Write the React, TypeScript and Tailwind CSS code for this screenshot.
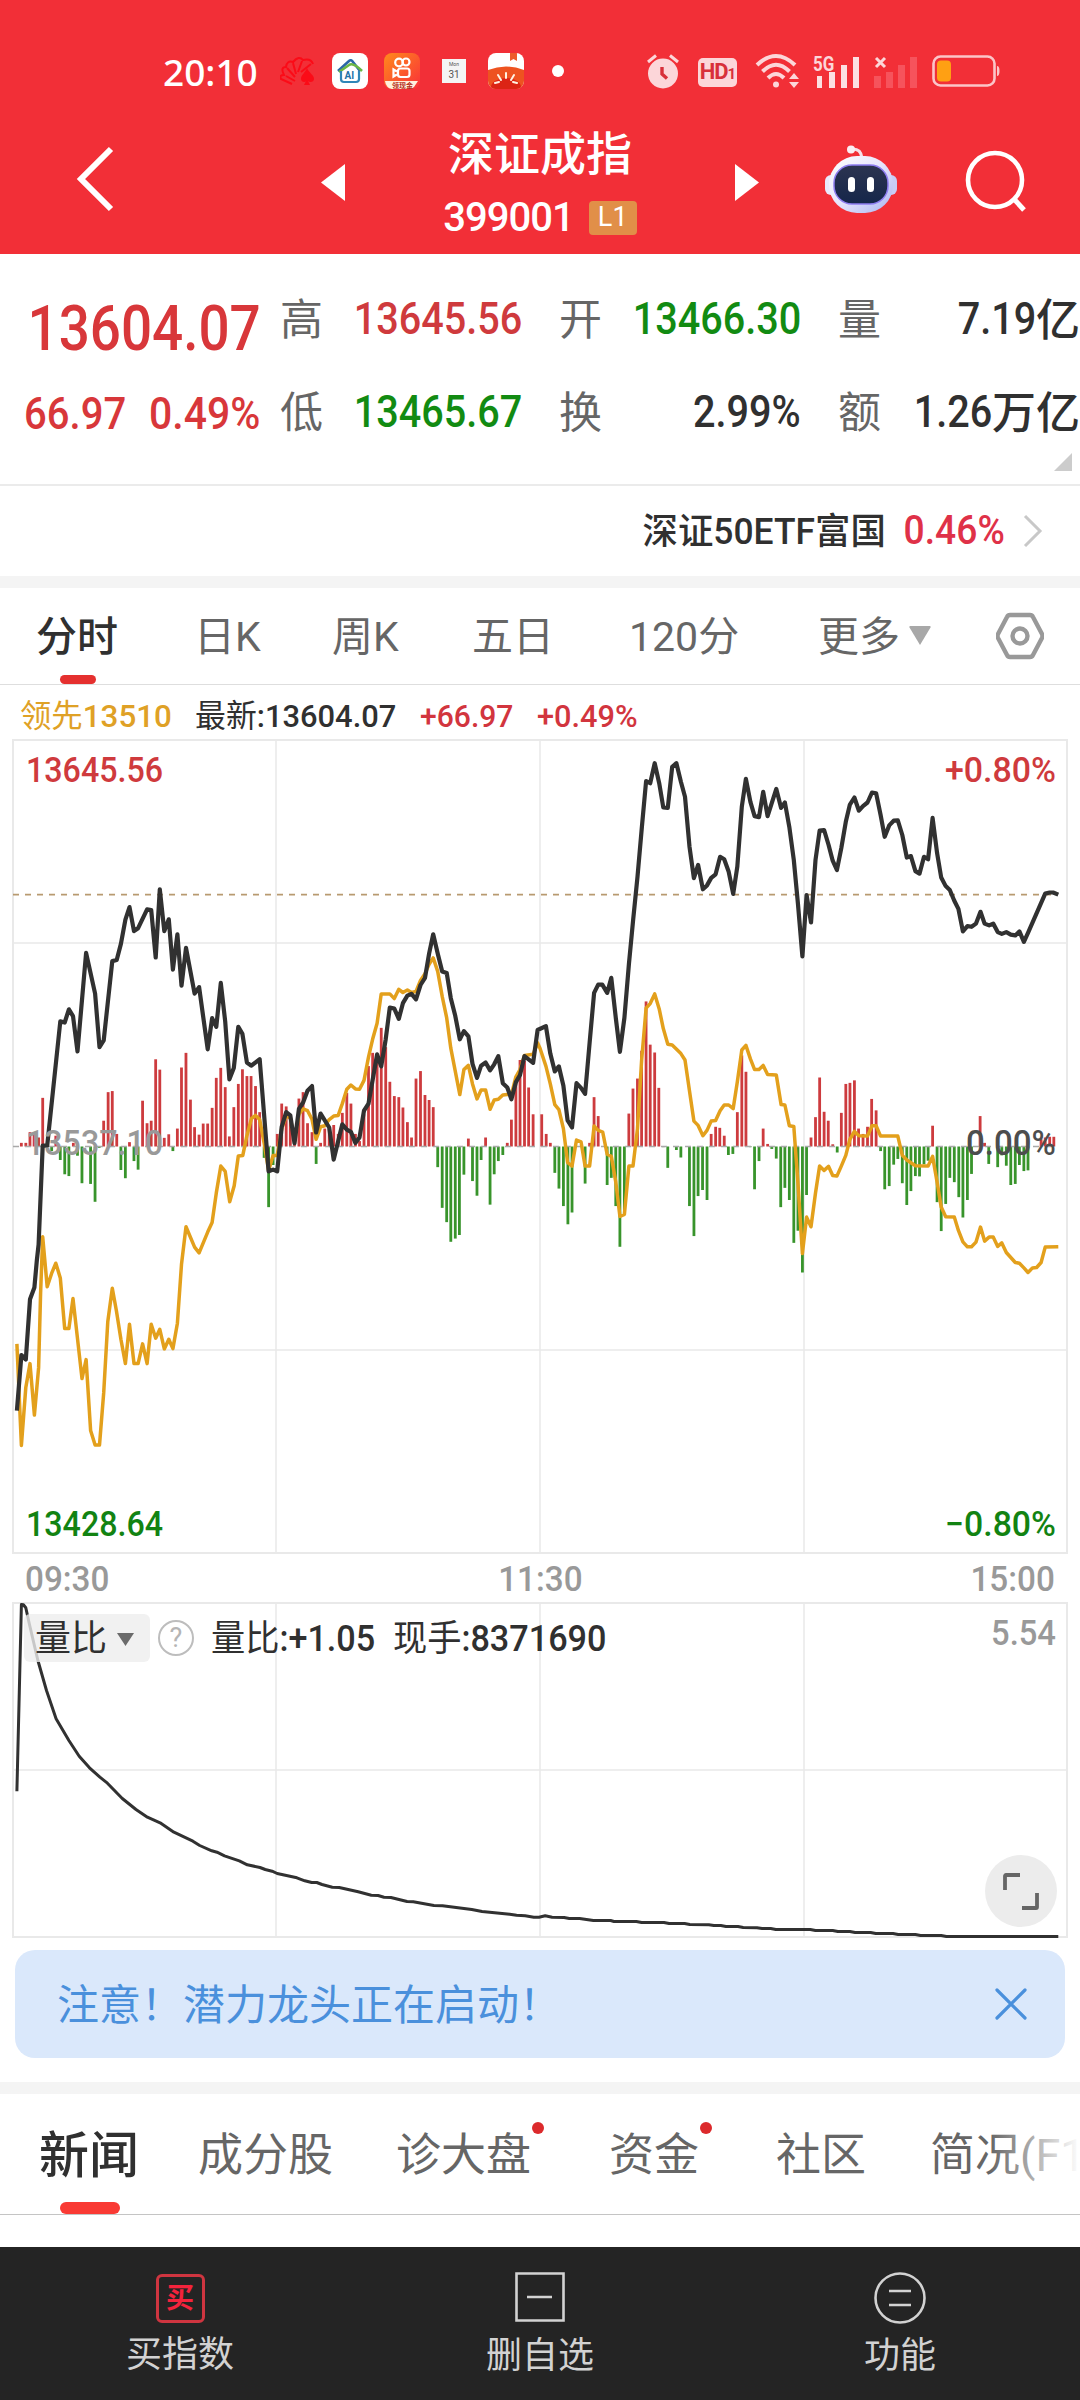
import { ReactNode } from 'react';
import { clsx } from 'clsx';

// Both sessions are stored in plot units: 1/2.9037 px across, 1/2.8 px down.
// The afternoon starts at x = 528 of the plot.
const PRICE_AM =
  '49,1430 62,1274 75,1287 87,1118 100,1085 107,1010 112,965 124,688 137,688 175,340 188,343 200,306 212,325 225,424 250,148 276,262 289,412 301,393 326,171 339,168 351,123 364,55 376,20 389,87 401,79 427,26 439,28 452,161 464,-30 477,87 490,54 502,195 515,96 527,240 540,134 565,262 578,244 603,418 616,331 628,355 641,232 654,340 666,502 679,470 692,355 704,375 717,455 729,464 754,446 780,760 793,755 805,760 818,635 831,594 843,603 855,681 868,585 880,567 893,534 906,521 918,651 931,598 956,637 969,727 994,628 1007,643 1019,649 1032,680 1044,665 1057,590 1070,570 1095,432 1107,466 1120,390 1132,301 1145,304 1158,333 1170,289 1183,268 1195,263 1208,278 1221,238 1234,218 1246,150 1258,96 1271,150 1284,200 1297,204 1309,275 1322,325 1335,390 1347,367 1360,382 1372,459 1385,498 1397,464 1410,455 1423,477 1435,460 1447,437 1460,513 1473,525 1485,558 1498,510 1510,490 1523,437 1535,446 1548,456 1561,364';
const PRICE_PM =
  '17,353 30,430 43,480 55,466 68,520 80,617 93,637 106,513 119,526 131,543 144,400 157,260 169,237 181,237 195,260 207,218 220,330 232,425 245,330 258,180 270,60 283,-65 296,-205 308,-333 320,-327 333,-383 346,-327 358,-259 371,-258 384,-373 396,-383 409,-331 421,-289 434,-149 447,-61 459,-98 473,-30 485,-41 497,-62 510,-72 523,-121 535,-114 548,-79 561,-17 573,-93 586,-261 598,-339 611,-275 623,-235 636,-232 648,-303 661,-235 686,-311 700,-258 711,-273 724,-205 737,-112 749,9 762,158 774,-14 787,63 800,-112 812,-194 825,-196 838,-154 850,-110 862,-84 875,-145 888,-219 900,-267 913,-287 926,-250 938,-263 951,-273 964,-301 976,-299 989,-238 1001,-177 1014,-209 1027,-222 1039,-223 1052,-182 1065,-119 1077,-123 1090,-81 1102,-74 1115,-121 1127,-114 1140,-230 1153,-131 1165,-63 1178,-39 1190,-28 1203,2 1215,25 1228,88 1241,73 1253,75 1266,66 1279,33 1291,66 1304,71 1316,66 1329,90 1341,95 1354,90 1367,97 1380,99 1392,88 1405,117 1417,92 1467,-18 1480,-21 1490,-21 1505,-15';

const LEAD_AM =
  '49,1243 62,1527 75,1365 87,1298 100,1442 112,1310 118,1100 124,943 137,1083 150,1045 162,1017 175,1058 188,1200 200,1200 212,1116 238,1340 250,1287 263,1485 276,1526 289,1526 301,1380 313,1180 326,1087 338,1150 351,1230 364,1298 376,1188 389,1298 401,1298 414,1243 427,1298 439,1188 452,1227 464,1202 477,1257 490,1230 502,1256 515,1185 527,1020 540,915 565,972 578,988 603,930 616,903 628,820 641,745 654,760 667,845 680,800 692,717 705,715 717,660 730,612 742,603 754,615 767,680 780,757 793,715 805,715 818,640 831,605 843,610 856,675 868,600 880,585 893,590 906,614 918,670 931,635 943,632 956,615 969,605 982,603 994,570 1007,530 1019,518 1032,529 1044,530 1057,505 1070,440 1082,390 1095,345 1107,263 1132,263 1145,276 1158,250 1170,259 1183,252 1195,259 1208,256 1221,225 1234,206 1246,180 1258,162 1271,200 1284,270 1297,330 1309,415 1322,480 1335,545 1347,475 1360,463 1372,515 1385,557 1397,532 1410,532 1423,586 1435,560 1447,558 1460,546 1473,545 1485,545 1498,495 1510,475 1523,435 1548,432 1561,400';
const LEAD_PM =
  '0,415 17,465 30,515 43,573 55,587 68,640 80,735 93,745 106,672 119,677 131,745 144,745 157,633 169,645 182,650 195,712 207,718 220,790 232,886 245,880 258,745 270,745 283,640 295,450 308,303 320,290 333,263 346,305 358,360 371,404 384,406 409,430 421,448 434,535 447,619 459,631 473,660 485,645 497,619 510,617 523,590 535,574 548,574 561,584 573,510 586,420 598,407 611,445 623,475 636,475 648,463 661,489 686,490 700,573 711,574 724,632 737,634 749,790 762,990 774,888 787,915 800,820 812,745 825,757 838,746 850,771 862,773 875,745 888,715 900,670 913,648 926,660 951,661 964,632 976,632 989,661 1039,661 1052,715 1065,728 1090,744 1127,745 1140,718 1153,790 1165,860 1178,887 1203,888 1215,925 1228,957 1241,971 1253,971 1266,958 1279,916 1291,955 1304,944 1316,944 1329,970 1341,960 1354,987 1380,1015 1392,1017 1405,1030 1417,1043 1430,1030 1442,1029 1455,1015 1467,972 1505,971';

const BARS_AM =
  '62,680 75,680 87,650 99,655 112,665 124,554 150,703 162,660 175,728 188,768 200,773 213,680 225,716 238,793 263,795 276,845 288,694 301,618 314,538 326,535 339,655 351,756 364,779 376,678 389,731 401,755 414,562 427,625 439,618 452,446 464,475 477,666 490,656 502,703 515,640 527,469 540,428 553,559 565,636 578,657 590,626 603,626 616,582 628,498 641,470 654,524 666,662 679,580 692,515 704,474 717,493 729,493 742,521 754,594 767,722 780,860 793,742 805,655 818,570 831,578 843,610 855,650 868,556 880,538 893,625 906,650 918,739 931,680 943,640 956,640 969,630 982,655 994,596 1007,540 1019,570 1032,655 1044,675 1057,600 1070,465 1082,428 1095,432 1107,358 1120,412 1132,509 1145,549 1158,552 1170,581 1183,622 1195,665 1208,500 1221,479 1234,546 1246,560 1258,580 1271,748 1284,862 1297,902 1309,957 1322,948 1334,938 1347,769 1360,668 1372,787 1385,828 1397,728 1410,665 1423,853 1435,768 1447,731 1460,714 1473,680 1485,615 1498,500 1510,448 1523,450 1535,525 1548,600';
const BARS_PM =
  '5,600 18,655 30,680 43,764 55,808 68,857 81,908 93,875 131,794 144,680 157,552 169,605 195,798 207,778 220,857 232,971 245,880 258,598 270,528 283,500 295,422 308,284 320,405 333,427 345,526 358,692 371,750 396,700 409,721 434,857 447,941 459,829 472,812 485,840 497,655 510,635 522,638 535,660 547,714 560,711 573,594 586,435 598,481 611,692 623,810 636,731 648,640 661,683 673,697 686,724 699,860 711,806 724,840 737,960 749,926 762,1043 774,826 787,665 800,608 812,497 825,593 837,618 850,684 863,707 875,596 888,515 900,512 913,505 925,640 938,655 951,635 963,557 976,589 989,703 1001,810 1014,801 1027,741 1039,725 1052,793 1065,854 1077,815 1090,773 1102,774 1115,740 1127,730 1140,632 1153,846 1165,927 1178,851 1190,778 1203,790 1216,832 1228,889 1241,840 1253,767 1278,605 1291,680 1303,739 1329,748 1341,715 1354,744 1367,798 1380,795 1392,742 1405,759 1417,757 1455,670 1467,665 1480,663 1492,663';

const RATIO_AM =
  '49,992 62,432 68,433 75,442 85,490 110,600 135,690 163,775 200,840 230,887 260,922 290,950 312,968 355,1014 395,1047 428,1070 465,1087 505,1115 560,1142 580,1155 615,1171 630,1175 652,1186 695,1201 718,1213 755,1221 770,1227 790,1232 805,1239 862,1252 885,1261 905,1266 920,1266 935,1272 965,1280 985,1281 1040,1294 1078,1304 1098,1305 1115,1310 1135,1311 1182,1323 1200,1324 1260,1335 1285,1336 1370,1347 1400,1353 1480,1361 1500,1364 1525,1366 1550,1370 1565,1370';
const RATIO_PM =
  '15,1366 35,1370 70,1371 85,1374 115,1374 155,1380 205,1380 215,1383 280,1383 295,1386 360,1386 375,1389 420,1389 435,1392 490,1393 505,1395 525,1395 540,1398 575,1398 590,1401 630,1402 645,1404 670,1404 685,1407 785,1407 800,1410 850,1410 865,1413 900,1413 915,1416 960,1416 975,1419 1025,1419 1040,1422 1090,1422 1105,1425 1165,1425 1180,1428 1505,1428';

const UNIT_X = 2.9037;

function toPixels(am: string, pm: string, toY: (v: number) => number) {
  const parse = (text: string, offset: number) =>
    text.split(' ').map((pair) => {
      const [x, y] = pair.split(',').map(Number);
      return { x: x / UNIT_X + offset, y: toY(y) };
    });
  return [...parse(am, -12), ...parse(pm, 528)];
}

const toLine = (points: { x: number; y: number }[]) =>
  points.map((p) => `${p.x.toFixed(1)},${p.y.toFixed(1)}`).join(' ');

const priceY = (v: number) => v / 2.8 + 161;
const ratioY = (v: number) => v / 3 - 141.5;

const price = toPixels(PRICE_AM, PRICE_PM, priceY);
const lead = toPixels(LEAD_AM, LEAD_PM, priceY);
const bars = toPixels(BARS_AM, BARS_PM, priceY);
const ratio = toPixels(RATIO_AM, RATIO_PM, ratioY);

const BASE = 407.5;

function ChartLabel({ x, y, width, color, children }: { x: number; y: number; width: number; color: string; children: string }) {
  return (
    <text x={x} y={y} textLength={width} lengthAdjust="spacingAndGlyphs" fill={color} fontSize={35} fontWeight={500}>
      {children}
    </text>
  );
}

function PriceChart() {
  return (
    <svg className="block" width="1056" height="815" viewBox="0 0 1056 815">
      <g stroke="#e9e9e9" strokeWidth={2} fill="none">
        <rect x={1} y={1} width={1054} height={813} />
        <path d="M264 1V814M528 1V814M792 1V814" strokeWidth={1.5} />
        <path d="M1 204H1055M1 611H1055" strokeWidth={1.5} />
      </g>
      {bars.map((bar) => (
        <rect
          key={bar.x}
          x={bar.x - 1.4}
          y={Math.min(bar.y, BASE)}
          width={2.8}
          height={Math.abs(bar.y - BASE)}
          fill={bar.y < BASE ? '#cd3b3e' : '#38942b'}
        />
      ))}
      <path d="M1 155.7H1044" stroke="#b89a70" strokeWidth={1.8} strokeDasharray="6 6" />
      <path d="M1 407.5H1044" stroke="#a9a9a9" strokeWidth={1.6} strokeDasharray="6 6" />
      <g fill="none" strokeLinejoin="round">
        <polyline points={toLine(lead)} stroke="#e3a01c" strokeWidth={3.5} />
        <polyline points={toLine(price)} stroke="#313131" strokeWidth={4.2} />
      </g>
      <ChartLabel x={14} y={43} width={137} color="#cf3a3d">13645.56</ChartLabel>
      <ChartLabel x={933} y={43} width={111} color="#cf3a3d">+0.80%</ChartLabel>
      <ChartLabel x={14} y={416} width={137} color="#999999">13537.10</ChartLabel>
      <ChartLabel x={954} y={416} width={90} color="#4d4d4d">0.00%</ChartLabel>
      <ChartLabel x={14} y={797} width={137} color="#128312">13428.64</ChartLabel>
      <ChartLabel x={933} y={797} width={111} color="#128312">−0.80%</ChartLabel>
    </svg>
  );
}

function RatioChart() {
  return (
    <div className="relative">
      <svg className="block" width="1056" height="336" viewBox="0 0 1056 336">
        <g stroke="#e9e9e9" strokeWidth={2} fill="none">
          <rect x={1} y={1} width={1054} height={334} />
          <path d="M264 1V335M528 1V335M792 1V335M1 168H1055" strokeWidth={1.5} />
        </g>
        <polyline points={toLine(ratio)} fill="none" stroke="#313131" strokeWidth={3} strokeLinejoin="round" />
        <ChartLabel x={979} y={43} width={65} color="#999999">5.54</ChartLabel>
      </svg>
      <div className="absolute left-3 top-3 flex items-center text-[36px] leading-none text-[#303030]">
        <div className="flex h-12 w-[126px] items-center gap-[9px] rounded-md bg-[#ededed]/80 pl-[11px] pt-0.5">
          量比
          <svg width="19" height="13" viewBox="0 0 19 13"><path d="M1 0h17l-8.500 13z" fill="#6b6b6b" /></svg>
        </div>
        <div className="ml-2 flex size-9 items-center justify-center rounded-full border-2 border-[#bdbdbd] text-[27px] text-[#b5b5b5]">?</div>
        <span className="ml-[17px] w-[182px] pt-0.5">
          <span className="inline-block origin-left scale-x-[0.95] whitespace-nowrap font-medium">
            <span className="font-normal">量比</span>:+1.05
          </span>
        </span>
        <span className="inline-block origin-left scale-x-[0.95] whitespace-nowrap pt-0.5 font-medium">
          <span className="font-normal">现手</span>:8371690
        </span>
      </div>
      <div className="absolute bottom-[11px] right-[11px] flex size-[72px] items-center justify-center rounded-full bg-[#ececec]">
        <svg width="38" height="38" viewBox="0 0 38 38" fill="none" stroke="#666" strokeWidth={3.8}>
          <path d="M18 3H4a1 1 0 0 0-1 1V18M20 36H34a1 1 0 0 0 1-1V21" />
        </svg>
      </div>
    </div>
  );
}

function StatusBar() {
  return (
    <div className="flex h-[108px] items-center pl-[163px] pt-[34px]">
      <span className="w-[117px] font-['Noto_Sans'] text-[37px] font-medium leading-none">20:10</span>
      <svg width="36" height="32" viewBox="0 0 36 32" fill="none" stroke="#fb0b17" strokeWidth={2}>
        <path d="M12 29L1 24Q-1 20 4 20Q0 12 6 12Q7 5 13 7Q19 0 23 5Q31 3 33 9M6 21L15 26M7 13L15 22M13 8L16 19M22 6L18 17M31 9L21 17" />
        <path d="M27 13C25 18 21 20 21 24C21 27 25 28 26 26L24 30H30L28 26C30 28 34 27 34 24C34 20 29 18 27 13Z" fill="#fb0b17" stroke="none" />
      </svg>
      <svg className="ml-4" width="36" height="36" viewBox="0 0 36 36" fill="none">
        <rect width="36" height="36" rx="8" fill="#fff" />
        <path d="M6 18L17 8Q19 6 21 9L28 18" stroke="#2a66a8" strokeWidth={2.6} />
        <path d="M7 19L17 12Q21 9 30 18" stroke="#6bb644" strokeWidth={2.6} />
        <path d="M9 18V26Q9 29 12 29H24Q27 29 27 26V18" stroke="#2f86b8" strokeWidth={2.2} />
        <text x="12.500" y="25.500" fill="#2371a8" fontSize="10" fontWeight="700">AI</text>
      </svg>
      <svg className="ml-4" width="36" height="36" viewBox="0 0 36 36" fill="none">
        <defs>
          <linearGradient id="camera-bg" x1="0" y1="0" x2="1" y2="1">
            <stop offset="0" stopColor="#ff8a1c" />
            <stop offset="1" stopColor="#f9303a" />
          </linearGradient>
        </defs>
        <rect width="36" height="36" rx="8" fill="url(#camera-bg)" />
        <g stroke="#fff" strokeWidth={2.2}>
          <circle cx="15" cy="9.500" r="3.800" />
          <circle cx="22" cy="9" r="3.500" />
          <rect x="14" y="15.500" width="11.500" height="8.500" rx="2.500" />
          <path d="M13 18.500L9.500 16.500V23.500L13 21.500" />
        </g>
        <path d="M1 28H34L30 34Q28 36 25 36H8Q2 35 1 28Z" fill="#fff1dc" />
        <text x="8" y="34.500" fill="#b5301c" fontSize="7" fontWeight="700">领现金</text>
      </svg>
      <div className="ml-[22px] flex size-6 flex-col items-center bg-[#f4f4f4] font-['Roboto'] leading-none text-[#555]">
        <span className="pt-[3px] text-[5px]">Mon</span>
        <span className="pt-[3px] text-[10px]">31</span>
      </div>
      <svg className="ml-[22px]" width="36" height="36" viewBox="0 0 36 36" fill="none">
        <clipPath id="tomato"><rect width="36" height="36" rx="8" /></clipPath>
        <g clipPath="url(#tomato)">
          <rect width="36" height="36" fill="#fff" />
          <path d="M22 0H29V8L25.500 6L22 8Z" fill="#ee5a2a" />
          <path d="M0 17Q18 10 36 17V36H0Z" fill="#ee5320" />
          <ellipse cx="18" cy="34" rx="15" ry="9" fill="#dc2415" />
          <path d="M18 20V25M10 22L13 27M26 22L23 27M7 30L11 29M29 30L25 29" stroke="#fff3e2" strokeWidth={2} strokeLinecap="round" />
        </g>
      </svg>
      <span className="ml-7 size-3 rounded-full bg-white" />
      <svg className="ml-[83px]" width="32" height="36" viewBox="0 0 32 36" fill="none">
        <circle cx="16" cy="20.500" r="15" fill="#fcd6d9" />
        <path d="M1 9L9 2.500M31 9L23 2.500" stroke="#fcd6d9" strokeWidth={3} />
        <path d="M15 14V21L20 25.500" stroke="#d8303a" strokeWidth={3.4} />
      </svg>
      <div className="ml-[19px] mt-0.5 flex h-[29px] w-[39px] items-center justify-center rounded-[5px] bg-[#fcd6d9] font-['Roboto'] text-[22px] font-bold leading-none tracking-[-1px] text-[#d8303a]">
        HD<span className="pt-[5px] text-[15px]">1</span>
      </div>
      <svg className="ml-[18px]" width="45" height="36" viewBox="0 0 45 36" fill="none" stroke="#fcd6d9" strokeWidth={4}>
        <path d="M2 12Q21 -6 40 12M7.500 18.500Q21 5 34.500 18.500M13 25Q21 17 29 25" />
        <circle cx="21" cy="31.500" r="3" fill="#fcd6d9" stroke="none" />
        <path d="M34 26L39 20L44 26ZM34 29L39 35L44 29Z" fill="#fcd6d9" stroke="none" />
      </svg>
      <div className="relative ml-[13px] flex">
        <svg width="46" height="34" viewBox="0 0 46 34">
          <path d="M4 22h5v12H4zM16 18h6v16H16zM28 11h6v23H28zM40 3h6v31H40z" fill="#fce0e2" />
        </svg>
        <span className="absolute left-0 top-0 origin-left scale-x-[0.85] text-[20px] font-bold leading-none text-[#fcd6d9]">5G</span>
      </div>
      <svg className="ml-[15px]" width="45" height="34" viewBox="0 0 45 34">
        <path d="M0 22h7v12H0zM12 18h7v16H12zM24 11h7v23H24zM36 3h7v31H36z" fill="#f6535c" />
        <path d="M2 4L11 13M11 4L2 13" stroke="#fcd6d9" strokeWidth={3} />
      </svg>
      <svg className="ml-[13px]" width="68" height="32" viewBox="0 0 68 32" fill="none">
        <rect x="1.500" y="1.500" width="61" height="29" rx="7" stroke="#fbc5c8" strokeWidth={2.600} />
        <rect x="5" y="5.500" width="14" height="21" rx="4" fill="#ffa013" />
        <path d="M65 11Q67.500 11 67.500 16T65 21Z" fill="#fbc5c8" />
      </svg>
    </div>
  );
}

function Robot() {
  return (
    <svg className="mb-1 ml-[66px]" width="72" height="70" viewBox="0 0 72 70">
      <defs>
        <linearGradient id="helmet" x1="0" y1="0" x2="1" y2="1">
          <stop offset="0" stopColor="#ffffff" />
          <stop offset="0.500" stopColor="#e6e4fb" />
          <stop offset="1" stopColor="#a9b4f2" />
        </linearGradient>
        <linearGradient id="visor" x1="0" y1="0" x2="0" y2="1">
          <stop offset="0" stopColor="#2c3450" />
          <stop offset="1" stopColor="#15264a" />
        </linearGradient>
      </defs>
      <path d="M26 5Q36 4 37 14" fill="none" stroke="#f7dfe8" strokeWidth={3} />
      <circle cx="26" cy="5.500" r="4" fill="#fbeef3" />
      <rect x="0" y="31" width="12" height="20" rx="6" fill="#e9e9fb" />
      <rect x="60" y="31" width="12" height="20" rx="6" fill="#c9cdf6" />
      <rect x="4" y="12" width="64" height="57" rx="28" fill="url(#helmet)" />
      <rect x="9" y="21" width="54" height="39" rx="18" fill="url(#visor)" stroke="#8d7cf0" strokeWidth={1.500} />
      <rect x="23" y="33" width="7" height="15" rx="3.500" fill="#fff" />
      <rect x="42" y="33" width="7" height="15" rx="3.500" fill="#fff" />
    </svg>
  );
}

function Header() {
  return (
    <header className="h-[254px] bg-[#f22f37] text-white">
      <StatusBar />
      <div className="flex h-[146px] items-center">
        <svg className="mb-1 ml-[76px]" width="38" height="66" viewBox="0 0 38 66" fill="none" stroke="#fff" strokeWidth={6}>
          <path d="M35 3L5 33L35 63" />
        </svg>
        <svg className="ml-[207px] mt-0.5" width="24" height="37" viewBox="0 0 24 37"><path d="M24 0V37L0 18.500Z" fill="#fff" /></svg>
        <div className="flex w-[390px] flex-col items-center pt-[3px]">
          <h1 className="text-[46px] font-medium leading-none">深证成指</h1>
          <div className="mt-6 flex h-[34px] items-center gap-[15px] leading-none">
            <span className="text-[40px] font-medium tracking-[-1px]">399001</span>
            <span className="flex h-[34px] w-12 items-center justify-center rounded-[4px] bg-[#e18f48] text-[27px]">L1</span>
          </div>
        </div>
        <svg className="mt-0.5" width="24" height="37" viewBox="0 0 24 37"><path d="M0 0V37L24 18.500Z" fill="#fff" /></svg>
        <Robot />
        <svg className="ml-[67px]" width="64" height="64" viewBox="0 0 64 64" fill="none" stroke="#fff" strokeWidth={4.600}>
          <circle cx="31" cy="31" r="27" />
          <path d="M50 50L60 61" strokeWidth={5} />
        </svg>
      </div>
    </header>
  );
}

const stats = [
  [
    { label: '高', value: '13645.56', unit: '', color: 'text-[#cf3a3d]' },
    { label: '低', value: '13465.67', unit: '', color: 'text-[#128b12]' },
  ],
  [
    { label: '开', value: '13466.30', unit: '', color: 'text-[#128b12]' },
    { label: '换', value: '2.99%', unit: '', color: 'text-[#303030]' },
  ],
  [
    { label: '量', value: '7.19', unit: '亿', color: 'text-[#303030]' },
    { label: '额', value: '1.26', unit: '万亿', color: 'text-[#303030]' },
  ],
];

function Narrow({ className, children }: { className: string; children: ReactNode }) {
  return <span className={clsx('inline-block whitespace-nowrap font-medium', className)}>{children}</span>;
}

function Quote() {
  return (
    <section className="relative flex h-[232px] border-b-2 border-[#ebebeb] pt-[18px] leading-none">
      <div className="w-[280px] shrink-0 pl-6 text-[#d8373a]">
        <div className="flex h-[93px] items-center pt-5">
          <Narrow className="origin-left scale-x-[0.87] pl-1 text-[63px]">13604.07</Narrow>
        </div>
        <div className="flex h-[93px] items-center pt-[5px] text-[44px]">
          <span className="w-[125px]">
            <Narrow className="origin-left scale-x-[0.91]">66.97</Narrow>
          </span>
          <Narrow className="origin-left scale-x-[0.93]">0.49%</Narrow>
        </div>
      </div>
      <div className="flex gap-[37px]">
        {stats.map((column) => (
          <div key={column[0].label} className="w-[242px]">
            {column.map((item) => (
              <div key={item.label} className="flex h-[93px] items-center justify-between">
                <span className="pt-1 text-[43px] text-[#666]">{item.label}</span>
                <span className="flex w-0 items-center justify-end">
                  <Narrow className={clsx('origin-right scale-x-[0.9] text-[44px]', item.color)}>{item.value}</Narrow>
                  {item.unit && <Narrow className={clsx('pt-1 text-[44px]', item.color)}>{item.unit}</Narrow>}
                </span>
              </div>
            ))}
          </div>
        ))}
      </div>
      <svg className="absolute bottom-[13px] right-2" width="18" height="18" viewBox="0 0 18 18"><path d="M18 0V18H0Z" fill="#ccc" /></svg>
    </section>
  );
}

function EtfRow() {
  return (
    <section className="flex h-[90px] items-center justify-end pr-[37px] leading-none">
      <Narrow className="origin-right scale-x-[0.97] pt-[3px] text-[36.5px] text-[#303030]">深证50ETF富国</Narrow>
      <Narrow className="ml-2.5 origin-right scale-x-[0.93] text-[40px] text-[#df3148]">0.46%</Narrow>
      <svg className="ml-[18px]" width="20" height="34" viewBox="0 0 20 34" fill="none" stroke="#c8c8c8" strokeWidth={3}>
        <path d="M2 2L17 17L2 32" />
      </svg>
    </section>
  );
}

function ChartTabs() {
  return (
    <nav className="grid h-[97px] grid-cols-[158px_138px_140px_157px_189px_178px_auto] items-center border-b border-[#dedede] pl-9 text-[41px] leading-none text-[#666]">
      <div className="relative flex h-full items-center pt-[3px] font-medium text-[#303030]">
        分时
        <span className="absolute bottom-0 left-6 h-[9px] w-9 rounded-full bg-[#e5302f]" />
      </div>
      <span className="pt-[3px]">日K</span>
      <span className="pt-[3px]">周K</span>
      <span className="pt-[3px]">五日</span>
      <span className="pt-[3px]">120分</span>
      <span className="flex items-center gap-[9px] pt-[3px]">
        更多
        <svg className="mb-1" width="22" height="19" viewBox="0 0 22 19"><path d="M1 0H21Q22 0 21.500 1.500L11 19L.5 1.500Q0 0 1 0Z" fill="#a8a8a8" /></svg>
      </span>
      <svg width="48" height="48" viewBox="0 0 48 48" fill="none" stroke="#999" strokeWidth={4.400} strokeLinejoin="round">
        <path d="M14 3H34Q36 3 37 5L46 22Q47 24 46 26L37 43Q36 45 34 45H14Q12 45 11 43L2 26Q1 24 2 22L11 5Q12 3 14 3Z" />
        <circle cx="24" cy="24" r="7.500" />
      </svg>
    </nav>
  );
}

function InfoRow() {
  return (
    <div className="flex h-[54px] items-center pl-5 pt-[7px] text-[32px] leading-none text-[#303030]">
      <span className="w-[175px] text-[#dfa126]">
        <Narrow className="origin-left scale-x-[0.98]">
          <span className="font-normal">领先</span>13510
        </Narrow>
      </span>
      <span className="w-[225px]">
        <Narrow className="origin-left scale-x-[0.965]">
          <span className="font-normal">最新</span>:13604.07
        </Narrow>
      </span>
      <span className="w-[117px] text-[#d2353e]">
        <Narrow className="origin-left scale-x-[0.94]">+66.97</Narrow>
      </span>
      <Narrow className="origin-left scale-x-[0.96] text-[#d2353e]">+0.49%</Narrow>
    </div>
  );
}

function Banner() {
  return (
    <div className="mx-[15px] mt-3 flex h-[108px] items-center justify-between rounded-[20px] bg-[#dae8fb] pl-[42px] pr-[38px] text-[42px] leading-none text-[#4a90dc]">
      <span className="pt-[3px]">注意！潜力龙头正在启动！</span>
      <svg width="32" height="32" viewBox="0 0 32 32" stroke="#4a90dc" strokeWidth={3.200} strokeLinecap="round">
        <path d="M2 2L30 30M30 2L2 30" />
      </svg>
    </div>
  );
}

function NewsTabs() {
  return (
    <nav className="relative grid h-[121px] grid-cols-[159px_198px_213px_167px_154px_auto] items-center overflow-hidden whitespace-nowrap border-b border-[#c4c4c4] pl-[39px] text-[45px] leading-none text-[#666]">
      <div className="relative flex h-full items-center pt-1 text-[50px] font-medium text-[#303030]">
        新闻
        <span className="absolute bottom-0 left-[21px] h-3 w-[60px] rounded-full bg-[#f93a34]" />
      </div>
      <span className="pt-[3px]">成分股</span>
      <span className="relative w-fit pt-[3px]">
        诊大盘
        <i className="absolute -right-[13px] -top-2 size-3 rounded-full bg-[#dc2a2c]" />
      </span>
      <span className="relative w-fit pt-[3px]">
        资金
        <i className="absolute -right-[13px] -top-2 size-3 rounded-full bg-[#dc2a2c]" />
      </span>
      <span className="pt-[3px]">社区</span>
      <span className="pt-[3px]">简况(F10)</span>
      <div className="absolute right-0 top-0 h-full w-[90px] bg-linear-to-r from-white/0 to-white" />
    </nav>
  );
}

function BottomBar() {
  return (
    <footer className="grid h-[153px] grid-cols-3 bg-[#242424] pt-[25px] text-[36px] leading-none text-[#d2d2d2]">
      <div className="flex flex-col items-center gap-[14px]">
        <div className="mt-0.5 flex size-[49px] items-center justify-center rounded-[6px] border-[3px] border-[#cf3540] text-[28px] font-bold text-[#f4233c]">买</div>
        买指数
      </div>
      <div className="flex flex-col items-center gap-[16px]">
        <svg width="50" height="50" viewBox="0 0 50 50" fill="none" stroke="#d2d2d2" strokeWidth={2.600}>
          <path d="M1.500 1.500H48.500V48.500H1.500ZM12 25H37" />
        </svg>
        删自选
      </div>
      <div className="flex flex-col items-center gap-[14px]">
        <svg width="52" height="52" viewBox="0 0 52 52" fill="none" stroke="#d2d2d2" strokeWidth={2.600}>
          <circle cx="26" cy="26" r="24.500" />
          <path d="M15 19H37M15 33H37" />
        </svg>
        功能
      </div>
    </footer>
  );
}

export default function App() {
  return (
    <main className="flex h-[2400px] w-[1080px] flex-col overflow-hidden bg-white font-['Roboto','Noto_Sans_CJK_SC',sans-serif]">
      <Header />
      <Quote />
      <EtfRow />
      <div className="h-3 bg-[#f4f4f4]" />
      <ChartTabs />
      <InfoRow />
      <div className="px-3">
        <PriceChart />
        <div className="flex h-12 items-center justify-between px-[13px] pt-0.5 text-[35px] leading-none text-[#999]">
          <Narrow className="origin-left scale-x-[0.95]">09:30</Narrow>
          <Narrow className="scale-x-[0.95]">11:30</Narrow>
          <Narrow className="origin-right scale-x-[0.95]">15:00</Narrow>
        </div>
        <RatioChart />
      </div>
      <Banner />
      <div className="mt-6 h-3 bg-[#f4f4f4]" />
      <NewsTabs />
      <div className="flex-1" />
      <BottomBar />
    </main>
  );
}
